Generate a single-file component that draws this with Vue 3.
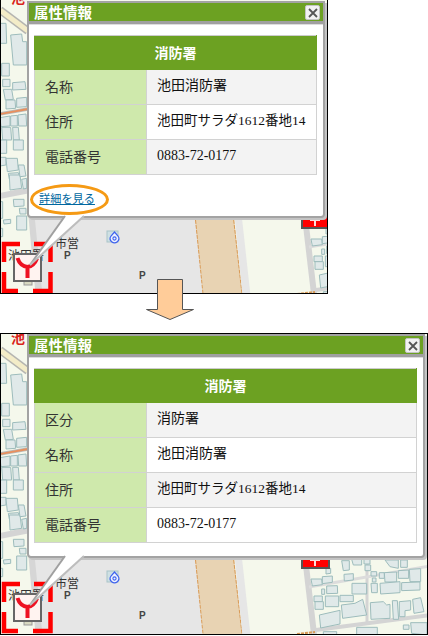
<template>
  <div class="page">
    <div v-for="frame in frames" :key="frame.id" class="frame" :class="frame.id">
      <svg class="map" :viewBox="frame.viewBox" xmlns="http://www.w3.org/2000/svg">
        <rect x="0" y="300" width="440" height="340" fill="#f5f8ec" />

        <!-- ground areas -->
        <polygon points="28,540 195,540 203,640 38,640" fill="#e6e6e6" />
        <polygon points="27,540 33,540 43,640 36,640" fill="#d6d6d6" />
        <polygon points="193,540 232,540 243,640 204,640" fill="#e8d3b3" />
        <path d="M194 545 L203 634 M232 545 L242 634" stroke="#d99a55" stroke-width="1" stroke-dasharray="4 1" fill="none" />
        <polygon points="233,540 240,540 251,640 243,640" fill="#e6e6e6" />

        <!-- roads -->
        <path d="M303 540 L314 634" stroke="#d4d4d4" stroke-width="6" fill="none" />
        <path d="M367 556 L367 622" stroke="#d4d4d4" stroke-width="3" fill="none" />
        <path d="M309 587 L430 566" stroke="#dcdcdc" stroke-width="3" fill="none" />
        <path d="M316 630 L430 615" stroke="#d4d4d4" stroke-width="4" fill="none" />
        <path d="M0 536 L30 530" stroke="#d4d4d4" stroke-width="6" fill="none" />
        <path d="M0 350 L28 371" stroke="#b5b5b0" stroke-width="8" fill="none" />
        <path d="M0 350 L28 371" stroke="#f3ecc8" stroke-width="5" fill="none" />
        <path d="M0 454 L28 449" stroke="#b9b9b9" stroke-width="3.5" fill="none" />
        <path d="M0 454 L28 449" stroke="#e8905e" stroke-width="1.8" fill="none" />
        <path d="M297 634 L315 632" stroke="#d99a55" stroke-width="2" stroke-dasharray="3 1" fill="none" />

        <!-- buildings, traced at 3x -->
        <g v-for="group in buildings" :key="group.at" :transform="group.at" fill="#e0e9e9" stroke="#9dbcbc" stroke-width="3">
          <polygon v-for="p in group.polys" :key="p" :points="p" />
        </g>

        <!-- map labels -->
        <text x="11" y="343" class="map-label red">池</text>
        <text x="8" y="600" class="map-label">池田署</text>
        <text x="55" y="588" class="map-label">市営</text>
        <text x="64" y="599" class="parking">P</text>
        <text x="139" y="619" class="parking">P</text>

        <!-- facility icon -->
        <rect x="107" y="571" width="11" height="11" fill="#cfe0e4" stroke="#a9c4c8" />
        <path d="M114.500 572 L118 576 A4.300 4.300 0 1 1 111 576 Z" fill="#eef2ff" stroke="#3f63ee" stroke-width="1.200" />
        <circle cx="114.500" cy="578.500" r="1.600" fill="none" stroke="#3f63ee" stroke-width="1.100" />

        <!-- red marker behind the popup -->
        <rect x="302" y="530" width="27" height="38" fill="#ff0000" stroke="#555" stroke-width="2" />
        <path d="M315 558 V566 M310 560 H320" stroke="#ffdcdc" stroke-width="2" fill="none" />

        <!-- dashed selection -->
        <path d="M4 602 V584 H20 M34 584 H50.5 V602 M50.5 612 V631 H33 M18 631 H4 V612" stroke="#ff0000" stroke-width="4.5" fill="none" />

        <!-- selected marker -->
        <rect x="24" y="621" width="8" height="4" fill="#d7d8c0" stroke="#999" />
        <rect x="14" y="594" width="27" height="27" fill="#fff3f0" stroke="#666" stroke-width="2" />
        <path d="M17.500 598 Q20 606 27.500 607 Q34 606 37 598.500 M27.500 607 V618" stroke="#ee1122" stroke-width="4" fill="none" />
      </svg>

      <div class="popup">
        <div class="title-bar">
          <span class="title">属性情報</span>
          <button class="close" type="button">
            <svg width="10" height="10" viewBox="0 0 10 10">
              <path d="M1 1 L9 9 M9 1 L1 9" stroke="#555" stroke-width="1.800" />
            </svg>
          </button>
        </div>
        <div class="body">
          <table class="info">
            <colgroup>
              <col class="label-col" />
              <col />
            </colgroup>
            <thead>
              <tr><th colspan="2">消防署</th></tr>
            </thead>
            <tbody>
              <tr v-for="row in frame.rows" :key="row.label">
                <td class="label">{{ row.label }}</td>
                <td class="value" :class="{ narrow: row.narrow }">{{ row.value }}</td>
              </tr>
            </tbody>
          </table>
          <div v-if="frame.link" class="detail">
            <a class="detail-link" href="#">詳細を見る</a>
            <span class="ring"></span>
          </div>
        </div>
        <svg class="tail" width="62" height="52" viewBox="0 0 62 52">
          <path d="M38 0 L3 49 L56 0 Z" fill="#fff" />
          <path d="M38 0 L3 49" stroke="#a0a0a0" stroke-width="2" fill="none" />
          <path d="M57 0 L3 49" stroke="#bdbdbd" stroke-width="2" fill="none" />
        </svg>
      </div>
    </div>

    <svg class="down-arrow" width="49" height="42" viewBox="0 0 49 42">
      <polygon points="11.500,0.500 36.500,0.500 36.500,30.500 47.500,30.500 24,40.500 0.500,30.500 11.500,30.500" fill="#ffcc99" stroke="#555" />
    </svg>
  </div>
</template>

<script setup>
const address = { label: "住所", value: "池田町サラダ1612番地14", narrow: true };
const name = { label: "名称", value: "池田消防署" };
const phone = { label: "電話番号", value: "0883-72-0177" };

const frames = [
  {
    id: "before",
    viewBox: "1 340 326 293",
    link: true,
    rows: [name, address, phone],
  },
  {
    id: "after",
    viewBox: "1 334 426 300",
    link: false,
    rows: [{ label: "区分", value: "消防署" }, name, address, phone],
  },
];

const buildings = [
  {
    at: "translate(0 330) scale(.3333)",
    polys: [
      "32,135 65,132 68,155 80,155 80,225 40,225",
      "0,100 18,100 20,160 0,160",
      "5,220 28,220 28,258 5,258",
      "8,268 30,268 30,290 8,290",
      "38,278 75,275 78,298 38,300",
      "10,298 35,298 40,328 16,330",
      "18,330 45,330 47,355 18,357",
      "50,325 80,322 80,350 50,352",
      "0,383 30,378 30,408 3,410",
      "32,378 52,376 52,408 32,408",
      "54,375 78,372 80,408 56,408",
      "5,412 32,412 35,450 8,450",
      "38,412 55,412 58,450 40,450",
    ],
  },
  {
    at: "translate(0 480) scale(.3333)",
    polys: [
      "0,0 20,0 20,40 0,40",
      "40,0 70,0 70,30 40,30",
      "0,52 18,52 18,75 0,78",
      "18,55 52,55 55,90 22,95",
      "25,100 55,98 60,115 28,118",
      "28,105 60,105 65,145 30,150",
      "55,75 72,75 78,108 60,110",
      "65,118 80,115 80,145 70,147",
      "40,178 72,178 72,198 42,200",
      "58,205 78,205 78,222 60,222",
      "50,228 80,228 80,270 50,270",
      "0,185 8,185 8,235 0,235",
      "10,240 32,238 32,250 12,252",
      "0,265 8,265 8,290 0,290",
    ],
  },
  {
    at: "translate(290 550) scale(.3333)",
    polys: [
      "63,87 95,87 97,104 67,108",
      "97,80 127,78 127,97 97,101",
      "108,55 122,55 122,70 108,72",
      "162,73 190,71 190,90 163,93",
      "110,108 142,107 143,130 110,131",
      "95,117 104,117 104,133 95,133",
      "72,138 97,138 97,155 72,155",
      "75,155 100,155 100,178 75,178",
      "106,138 146,138 146,170 106,170",
      "150,136 190,136 190,155 150,155",
      "186,100 230,100 230,132 186,132",
      "88,195 150,181 150,222 92,234",
      "154,165 195,160 218,148 230,195 158,205",
      "243,65 260,65 260,78 243,78",
      "247,84 258,84 258,96 247,96",
      "243,100 262,100 262,128 245,128",
      "268,68 283,68 283,85 268,85",
      "283,68 320,66 320,96 285,96",
      "325,62 356,60 356,85 325,85",
      "358,58 392,56 392,95 360,95",
      "270,100 330,95 330,128 272,132",
      "335,98 390,96 390,120 335,122",
      "241,158 280,155 290,165 300,163 300,205 243,208",
      "307,152 322,152 326,208 310,208",
      "328,155 362,152 362,180 345,182 345,200 328,200",
      "368,148 392,143 402,185 372,190",
      "155,32 178,32 178,60 160,62",
      "185,28 215,28 215,45 190,45",
      "222,28 240,28 240,42 222,42",
      "225,45 242,45 242,62 225,62",
      "285,30 325,30 325,55 300,50",
      "332,30 352,30 352,52 332,52",
      "100,245 140,245 140,258 100,258",
      "200,232 262,232 262,258 200,258",
      "340,225 357,225 357,238 340,238",
      "362,218 411,218 411,255 365,250",
    ],
  },
];
</script>

<style scoped>
.page {
  position: relative;
  width: 428px;
  height: 636px;
  background: #fff;
  font-family: "Liberation Serif", "Noto Sans CJK JP", serif;
  overflow: hidden;
}

.frame {
  position: relative;
  box-sizing: border-box;
  overflow: hidden;
  border: 1px solid #000;
  background: #f5f8ec;
}

.frame.before {
  width: 328px;
  height: 294px;
  border-top: none;
  margin-bottom: 39px;
}

.frame.after {
  width: 428px;
  height: 302px;
}

.map {
  display: block;
  width: 100%;
  height: 100%;
}

.map-label {
  font-family: "Noto Sans CJK JP", sans-serif;
  font-size: 12px;
  fill: #333;
}

.map-label.red {
  font-size: 14px;
  font-weight: 700;
  fill: #d9231b;
}

.parking {
  font-family: "Liberation Sans", sans-serif;
  font-size: 10px;
  font-weight: 700;
  fill: #444;
}

.popup {
  position: absolute;
  left: 26px;
  top: 0;
  box-sizing: border-box;
  background: #fff;
  border: 2px solid #a3a3a3;
  border-radius: 0 0 4px 4px;
  box-shadow: 2px 2px 0 #c4c4c4;
}

.before .popup {
  top: 1px;
  width: 298px;
}

.after .popup {
  width: 398px;
}

.title-bar {
  display: flex;
  align-items: center;
  justify-content: space-between;
  box-sizing: border-box;
  height: 21px;
  padding: 0 3px 0 5px;
  background: #6ca122;
  border-bottom: 3px solid #a0a0a0;
  box-shadow: 0 1px 0 #ddd;
}

.title {
  color: #fff;
  font-family: "Noto Sans CJK JP", sans-serif;
  font-size: 14.500px;
  font-weight: 700;
  line-height: 16px;
}

.close {
  display: flex;
  align-items: center;
  justify-content: center;
  width: 15px;
  height: 15px;
  padding: 0;
  margin-top: 1px;
  background: #f2f2f2;
  border: 1px solid #c4c4c4;
  border-radius: 2px;
}

.body {
  padding: 11px 6px 13px 5px;
}

.info {
  width: 100%;
  border-collapse: collapse;
  table-layout: fixed;
  font-size: 14px;
  color: #111;
}

.label-col {
  width: 112px;
}

.info th {
  box-sizing: border-box;
  height: 34px;
  padding: 0 0 2px;
  background: #6ca122;
  border: 1px solid #6ca122;
  border-top-color: #ccc;
  color: #fff;
  font-family: "Noto Sans CJK JP", sans-serif;
  font-weight: 700;
  font-size: 14px;
}

.info td {
  box-sizing: border-box;
  height: 35px;
  padding: 0 0 2px 10px;
  border: 1px solid #d2d2d2;
  line-height: 18px;
  white-space: nowrap;
}

.info .label {
  background: #cfe9ac;
  color: #333;
  font-family: "Noto Sans CJK JP", sans-serif;
}

.info tr:nth-child(odd) .value {
  background: #f3f3f3;
}

.info tr:nth-child(even) .value {
  background: #fff;
}

.info .value.narrow {
  font-size: 13.500px;
}

.detail {
  position: relative;
  height: 14px;
  margin: 16px 0 -2px 5px;
  line-height: 14px;
}

.detail-link {
  color: #0067a0;
  font-family: "Noto Sans CJK JP", sans-serif;
  font-size: 11.200px;
}

.ring {
  position: absolute;
  left: -9px;
  top: -7px;
  width: 79px;
  height: 31px;
  box-sizing: border-box;
  border: 3px solid #f59a14;
  border-radius: 50%;
}

.tail {
  position: absolute;
  left: -2px;
  top: 100%;
  overflow: visible;
}

.down-arrow {
  position: absolute;
  left: 146px;
  top: 279px;
}
</style>
